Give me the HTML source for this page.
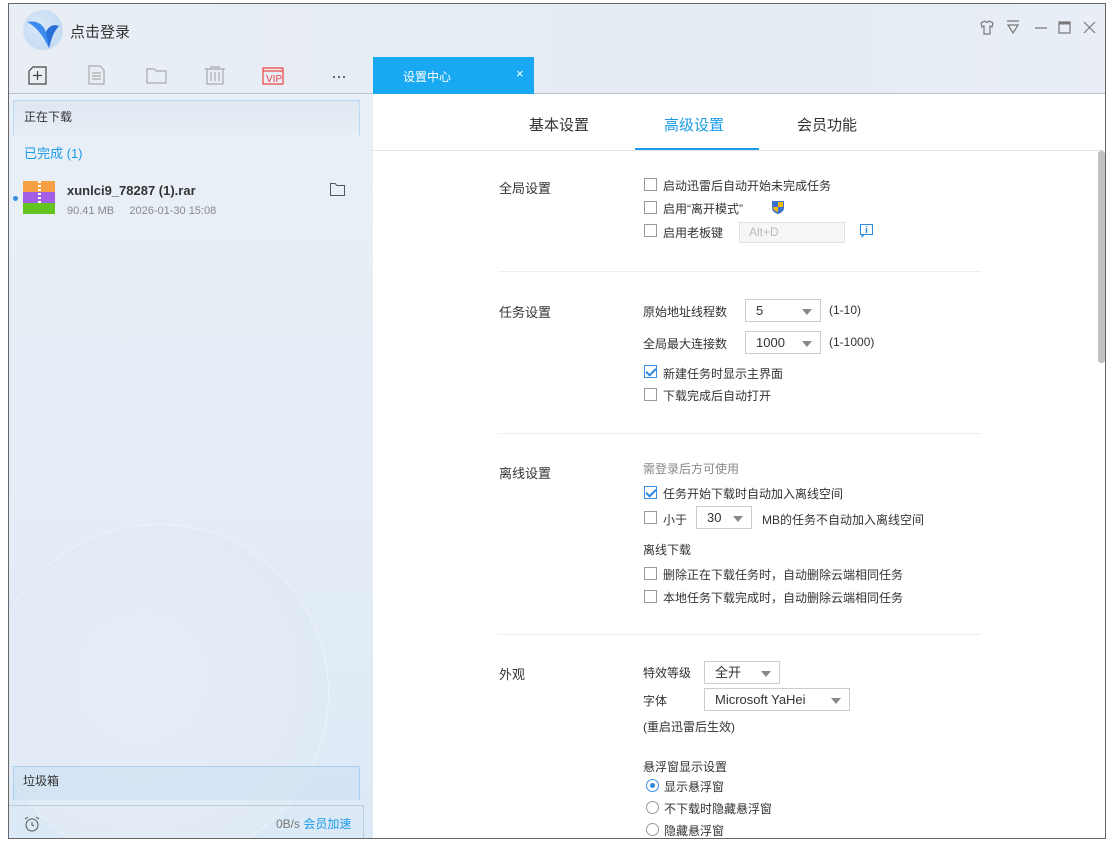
<!DOCTYPE html>
<html><head><meta charset="utf-8"><style>
*{margin:0;padding:0;box-sizing:border-box}
body{width:1113px;height:844px;background:#fff;position:relative;overflow:hidden;font-family:"Liberation Sans","Noto Sans CJK SC",sans-serif;font-size:12px;color:#333}
.a{position:absolute}
#win{left:8px;top:3px;width:1098px;height:836px;border:1px solid #666;background:#fff;overflow:hidden}
.cb{width:13px;height:13px;border:1px solid #999;background:#fff;position:absolute}
.ck{border-color:#3b8fe0}
.ck:after{content:"";position:absolute;left:3px;top:0px;width:4px;height:8px;border:solid #2b88e0;border-width:0 2px 2px 0;transform:rotate(45deg)}
.sel{position:absolute;height:23px;border:1px solid #ccc;background:#fff;padding-left:10px;line-height:21px;font-size:13px}
.sel:after{content:"";position:absolute;right:8px;top:9px;border:5px solid transparent;border-top:6px solid #888;border-bottom:0}
.rd{position:absolute;width:13px;height:13px;border:1px solid #999;border-radius:50%;background:#fff}
.t{position:absolute;white-space:nowrap;font-size:12px}
.h{position:absolute;font-size:13px;color:#333}
.sep{position:absolute;left:498px;width:483px;height:1px;background:#eee}
</style></head><body>
<div id="win" class="a">
<div class="a" style="left:0;top:0;width:1098px;height:90px;background:linear-gradient(90deg,#e9eef5,#e5ecf4 70%,#e9eef6)"></div>
<div class="a" style="left:0;top:89px;width:1098px;height:1px;background:#b9c3ce"></div>
<div class="a" style="left:14px;top:6px;width:40px;height:40px;border-radius:50%;background:radial-gradient(circle at 40% 40%,#d9e8f8,#bcd6f0)"></div>
<svg class="a" style="left:14px;top:6px" width="40" height="40"><path d="M4 12 C14 10 20 14 23 22 C26 16 30 14 36 16 C30 22 28 30 26 38 C22 30 16 18 4 12Z" fill="#3c8cf0"/><path d="M23 22 C26 16 30 14 36 16 C30 22 28 30 26 38Z" fill="#2a6fd8"/></svg>
<div class="t" style="left:61px;top:17px;font-size:15px;color:#333">点击登录</div>
<svg class="a" style="left:968px;top:15px" width="125" height="18" stroke="#777" fill="none" stroke-width="1.2">
<path d="M4 4 L8 2 Q10 5 12 2 L16 4 L15 8 L13 7 L13 15 L7 15 L7 7 L5 8 Z"/>
<path d="M30 2 H42 M31 6 H41 L36 14 Z"/>
<path d="M58 9 H70"/>
<rect x="82" y="3" width="11" height="11"/><path d="M82 4.5 H93" stroke-width="2"/>
<path d="M107 3 L118 14 M118 3 L107 14"/>
</svg>
<svg class="a" style="left:18px;top:60px" width="340" height="22" fill="none" stroke-width="1.2">
<g stroke="#444"><path d="M6 3 H19 V20 H2 V7 Z"/><path d="M10.5 7 V16 M6 11.5 H15"/></g>
<g stroke="#aaa"><path d="M62 2 H73 L77 6 V20 H62 Z M65 9 H74 M65 12 H74 M65 15 H74"/>
<path d="M120 5 H127 L129 7 H139 V19 H120 Z"/>
<path d="M178 5 H198 M184 5 V3 H192 V5 M180 5 V20 H196 V5 M184 8 V17 M188 8 V17 M192 8 V17"/></g>
<g stroke="#e44"><path d="M236 4 H256 V20 H236 Z M236 7 H256"/></g>
<text x="239" y="18" fill="#e44" font-size="10" font-family="Liberation Sans" stroke="none">VIP</text>
<g fill="#666" stroke="none"><rect x="306" y="12" width="2" height="2"/><rect x="311" y="12" width="2" height="2"/><rect x="316" y="12" width="2" height="2"/></g>
</svg>
<div class="a" style="left:364px;top:53px;width:161px;height:37px;background:#19a9f3"></div>
<div class="t" style="left:394px;top:64px;color:#fff;font-size:12px">设置中心</div>
<div class="t" style="left:507px;top:62px;color:#fff;font-size:13px">×</div>
<div class="a" style="left:0;top:90px;width:364px;height:746px;background:linear-gradient(180deg,#e9eff6 0%,#e6eef7 50%,#dce9f6 100%)"></div>
<div class="a" style="left:-20px;top:520px;width:340px;height:340px;border-radius:50%;background:radial-gradient(circle at 45% 45%,#e8eef7,#e0eaf5 70%,#e4edf7);border:1px solid #edf2f9"></div>
<div class="a" style="left:4px;top:96px;width:347px;height:35px;border:1px solid #b7daf5;border-bottom:none;background:linear-gradient(#dfe8f2,#e8eef5)"></div>
<div class="t" style="left:15px;top:104px;color:#333">正在下载</div>
<div class="t" style="left:15px;top:139px;color:#1a9ce8;font-size:13px">已完成 (1)</div>
<div class="a" style="left:4px;top:192px;width:5px;height:5px;border-radius:50%;background:#3a8fe6"></div>
<div class="a" style="left:14px;top:177px;width:32px;height:11px;background:#f7a043"></div>
<div class="a" style="left:14px;top:188px;width:32px;height:11px;background:#a35ee8"></div>
<div class="a" style="left:14px;top:199px;width:32px;height:11px;background:#63c420"></div>
<div class="a" style="left:29px;top:177px;width:3px;height:22px;background:repeating-linear-gradient(#fff 0 2px,transparent 2px 4px)"></div>
<div class="t" style="left:58px;top:179px;font-weight:bold;font-size:13px;color:#333">xunlci9_78287 (1).rar</div>
<div class="t" style="left:58px;top:201px;color:#888;font-size:11px">90.41 MB&nbsp;&nbsp;&nbsp;&nbsp;&nbsp;2026-01-30 15:08</div>
<svg class="a" style="left:320px;top:177px" width="18" height="16" fill="none" stroke="#555"><path d="M1.5 2.5 H6 L8 4.5 H15.5 V14.5 H1.5 Z"/></svg>
<div class="a" style="left:4px;top:762px;width:347px;height:34px;border:1px solid #a9d0ef;border-bottom:none;background:rgba(200,222,242,.5)"></div>
<div class="t" style="left:14px;top:768px;color:#333">垃圾箱</div>
<div class="a" style="left:0;top:801px;width:355px;height:1px;background:#bccddf"></div>
<div class="a" style="left:354px;top:801px;width:1px;height:35px;background:#bccddf"></div>
<svg class="a" style="left:14px;top:811px" width="18" height="18" fill="none" stroke="#555"><circle cx="9" cy="10" r="6"/><path d="M9 7 V10 L11 11 M2 4 L5 2 M16 4 L13 2"/></svg>
<div class="t" style="left:267px;top:811px;color:#777">0B/s <span style="color:#1a9ce8;font-size:12px">会员加速</span></div>
<div class="a" style="left:364px;top:146px;width:734px;height:1px;background:#e4e4e4"></div>
<div class="t" style="left:520px;top:110px;font-size:15px;color:#333">基本设置</div>
<div class="t" style="left:655px;top:110px;font-size:15px;color:#1a9ce8">高级设置</div>
<div class="a" style="left:626px;top:144px;width:124px;height:2px;background:#1a9ce8"></div>
<div class="t" style="left:788px;top:110px;font-size:15px;color:#333">会员功能</div>
<div class="a" style="left:1089px;top:147px;width:7px;height:212px;border-radius:3px;background:#c1c1c1"></div>
</div>
<div class="h" style="left:499px;top:178px">全局设置</div>
<div class="cb" style="left:644px;top:178px"></div><div class="t" style="left:663px;top:177px">启动迅雷后自动开始未完成任务</div>
<div class="cb" style="left:644px;top:201px"></div><div class="t" style="left:663px;top:200px">启用“离开模式”</div>
<svg class="a" style="left:770px;top:199px" width="16" height="16"><path d="M2 2 H14 V9 Q14 13 8 15 Q2 13 2 9Z" fill="#3a6fd0"/><path d="M8 3 H13 V8 H8Z M3 8 H8 V13 Q4 12 3 9Z" fill="#f6b800"/></svg>
<div class="cb" style="left:644px;top:224px"></div><div class="t" style="left:663px;top:224px">启用老板键</div>
<div class="a" style="left:739px;top:222px;width:106px;height:21px;border:1px solid #e2e2e2;background:#f6f6f6;color:#bbb;padding-left:9px;line-height:19px;font-size:12px">Alt+D</div>
<svg class="a" style="left:859px;top:223px" width="16" height="15" fill="none" stroke="#2a8ae0"><rect x="1.5" y="1.5" width="12" height="10"/><path d="M7.5 5 V10 M7.5 3 V4" stroke-width="1.5"/><path d="M3 11.5 V14 L5 11.5"/></svg>
<div class="sep" style="top:271px"></div>
<div class="h" style="left:499px;top:302px">任务设置</div>
<div class="t" style="left:643px;top:303px">原始地址线程数</div>
<div class="sel" style="left:745px;top:299px;width:76px">5</div><div class="t" style="left:829px;top:303px">(1-10)</div>
<div class="t" style="left:643px;top:335px">全局最大连接数</div>
<div class="sel" style="left:745px;top:331px;width:76px">1000</div><div class="t" style="left:829px;top:335px">(1-1000)</div>
<div class="cb ck" style="left:644px;top:365px"></div><div class="t" style="left:663px;top:365px">新建任务时显示主界面</div>
<div class="cb" style="left:644px;top:388px"></div><div class="t" style="left:663px;top:387px">下载完成后自动打开</div>
<div class="sep" style="top:433px"></div>
<div class="h" style="left:499px;top:463px">离线设置</div>
<div class="t" style="left:643px;top:460px;color:#888">需登录后方可使用</div>
<div class="cb ck" style="left:644px;top:486px"></div><div class="t" style="left:663px;top:485px">任务开始下载时自动加入离线空间</div>
<div class="cb" style="left:644px;top:511px"></div><div class="t" style="left:663px;top:511px">小于</div>
<div class="sel" style="left:696px;top:506px;width:56px">30</div><div class="t" style="left:762px;top:511px">MB的任务不自动加入离线空间</div>
<div class="t" style="left:643px;top:541px">离线下载</div>
<div class="cb" style="left:644px;top:567px"></div><div class="t" style="left:663px;top:566px">删除正在下载任务时，自动删除云端相同任务</div>
<div class="cb" style="left:644px;top:590px"></div><div class="t" style="left:663px;top:589px">本地任务下载完成时，自动删除云端相同任务</div>
<div class="sep" style="top:634px"></div>
<div class="h" style="left:499px;top:664px">外观</div>
<div class="t" style="left:643px;top:664px">特效等级</div>
<div class="sel" style="left:704px;top:661px;width:76px">全开</div>
<div class="t" style="left:643px;top:692px">字体</div>
<div class="sel" style="left:704px;top:688px;width:146px">Microsoft YaHei</div>
<div class="t" style="left:643px;top:718px">(重启迅雷后生效)</div>
<div class="t" style="left:643px;top:758px">悬浮窗显示设置</div>
<div class="rd" style="left:646px;top:779px;border-color:#3b8fe0"></div><div class="a" style="left:650px;top:783px;width:5px;height:5px;border-radius:50%;background:#2b88e0"></div><div class="t" style="left:664px;top:778px">显示悬浮窗</div>
<div class="rd" style="left:646px;top:801px"></div><div class="t" style="left:664px;top:800px">不下载时隐藏悬浮窗</div>
<div class="rd" style="left:646px;top:823px"></div><div class="t" style="left:664px;top:822px">隐藏悬浮窗</div>
</body></html>
